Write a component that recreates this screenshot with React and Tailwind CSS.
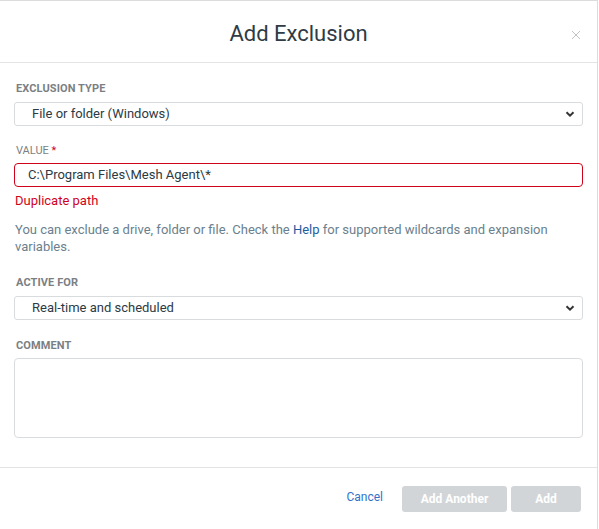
import React from "react";

function Chevron() {
  return (
    <svg width="10" height="10" viewBox="0 0 10 10" className="absolute right-[7px] top-1/2 -translate-y-1/2">
      <path d="M1.5 3.2 L5 6.6 L8.5 3.2" fill="none" stroke="#333" strokeWidth="2" />
    </svg>
  );
}

function Label({ children }) {
  return (
    <div className="text-[11px] font-bold uppercase text-[#7b7f83] tracking-[0.1px] leading-[14px] mb-[6px]">
      {children}
    </div>
  );
}

function Select({ value }) {
  return (
    <div className="relative h-[24px] rounded-[3px] border border-[#d9dcde] flex items-center pl-[17px] text-[13px] text-[#2c3a44]">
      {value}
      <Chevron />
    </div>
  );
}

export default function App() {
  return (
    <div className="w-[598px] h-[529px] bg-white border-t border-r border-[#dcdcdc] flex flex-col" style={{ fontFamily: "Roboto, 'Liberation Sans', sans-serif" }}>
      <div className="relative h-[62px] border-b border-[#e3e3e3] flex items-center justify-center shrink-0">
        <div className="text-[22px] text-[#2f3b45] tracking-[0px] mt-[3px]">Add Exclusion</div>
        <svg width="10" height="10" viewBox="0 0 10 10" className="absolute right-[16px] top-[29px]">
          <path d="M1 1 L9 9 M9 1 L1 9" stroke="#c4c4c4" strokeWidth="1" />
        </svg>
      </div>
      <div className="px-[14px] pt-[19px] flex-1">
        <div className="pl-[2px]"><Label>Exclusion Type</Label></div>
        <Select value="File or folder (Windows)" />

        <div className="pl-[2px] mt-[18px] text-[11px] text-[#7b7f83] leading-[14px] mb-[5px]">
          VALUE <span className="text-[#d0021b]">*</span>
        </div>
        <div className="h-[24px] rounded-[4px] border border-[#d0021b] flex items-center pl-[13px] text-[13px] text-[#2c3a44]">
          C:\Program Files\Mesh Agent\*
        </div>
        <div className="text-[13px] text-[#d0021b] mt-[5px] pl-[1px] leading-[18px]">Duplicate path</div>
        <p className="text-[13px] text-[#6b7f8e] mt-[11px] pl-[1px] leading-[17px]">
          You can exclude a drive, folder or file. Check the <span className="text-[#1f5e9e]">Help</span> for supported wildcards and expansion variables.
        </p>

        <div className="pl-[2px] mt-[21px]"><Label>Active For</Label></div>
        <Select value="Real-time and scheduled" />

        <div className="pl-[2px] mt-[19px]"><Label>Comment</Label></div>
        <div className="h-[80px] rounded-[4px] border border-[#d9dcde] mt-[-1px]"></div>
      </div>
      <div className="h-[62px] border-t border-[#e3e3e3] flex items-center justify-end pr-[16px] shrink-0">
        <span className="text-[12px] text-[#2f73c9] mr-[19px] mt-[-3px]">Cancel</span>
        <div className="w-[105px] h-[26px] rounded-[3px] bg-[#d2d5d8] text-white text-[12px] font-bold flex items-center justify-center">Add Another</div>
        <div className="w-[70px] h-[26px] rounded-[3px] bg-[#d2d5d8] text-white text-[12px] font-bold flex items-center justify-center ml-[4px]">Add</div>
      </div>
    </div>
  );
}
